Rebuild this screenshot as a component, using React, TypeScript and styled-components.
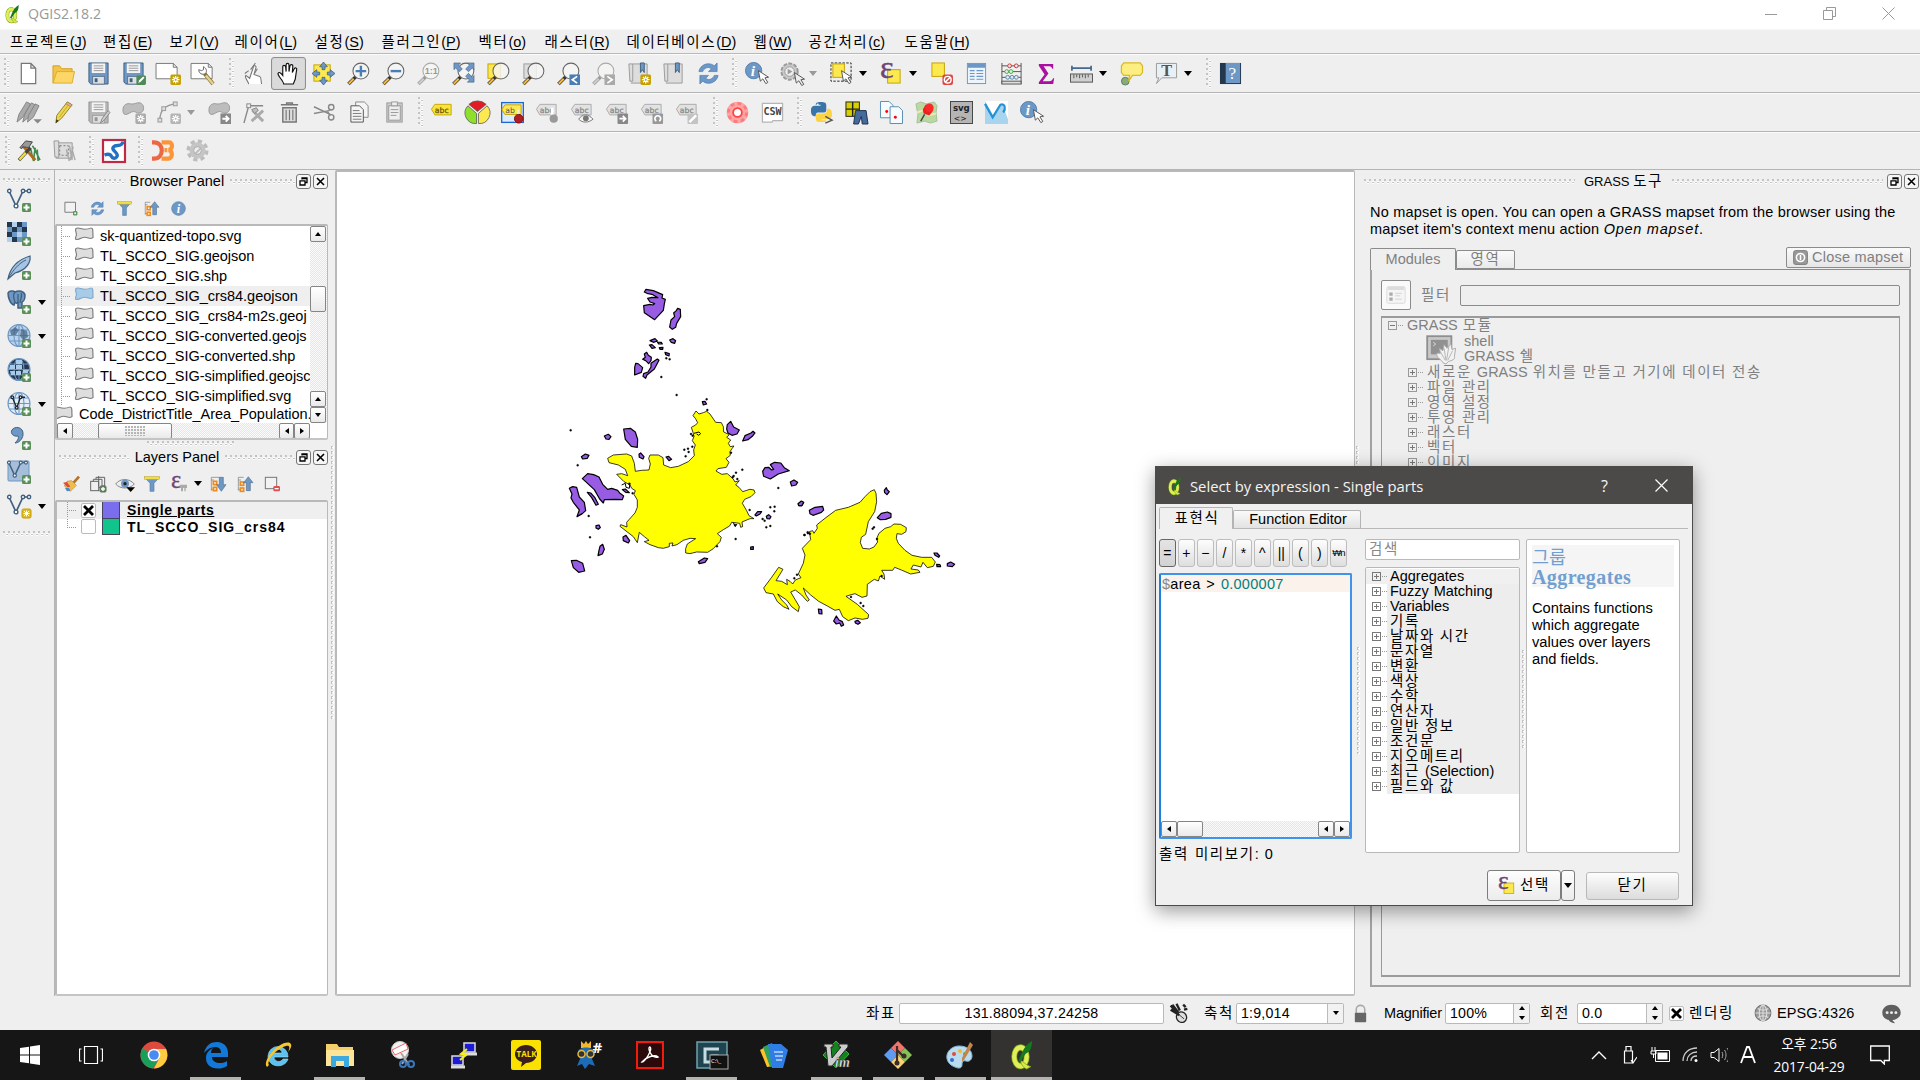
import React from 'react';
import styled, { createGlobalStyle, css } from 'styled-components';

const Global = createGlobalStyle`
  * { box-sizing: border-box; }
  html, body { margin: 0; padding: 0; overflow: hidden; background: #efefef; }
  body { font-family: "Liberation Sans", "Noto Sans CJK KR", sans-serif; font-size: 14.5px; color: #000; }
`;

/* ---------- text ---------- */
const Hangul = styled.span`
  font-size: 14.5px;
  letter-spacing: 1.6px;
`;
const Label = ({ text }: { text: string }) => (
  <>
    {text.split(/([\uac00-\ud7a3]+)/).map((part, i) => (i % 2 ? <Hangul key={i}>{part}</Hangul> : part))}
  </>
);

/* ---------- icons ---------- */
const Y = '#fce94f';
const YD = '#c4a000';
const B = '#6d97c4';
const BD = '#41607f';
const G = '#9a9a9a';

const Plus = () => (
  <g>
    <rect x="15" y="15" width="9" height="9" rx="1.5" fill="#5a8f5a" />
    <path d="M19.5 16.5v6M16.5 19.5h6" stroke="#fff" strokeWidth="2" />
  </g>
);
const Star = ({ c = YD }: { c?: string }) => (
  <g>
    <rect x="14" y="13" width="11" height="11" rx="1.5" fill={c} />
    <path d="M19.5 14.5v8M15.5 18.5h8M16.7 15.7l5.6 5.6M22.3 15.7l-5.6 5.6" stroke="#fff" strokeWidth="1.3" />
    <circle cx="19.5" cy="18.5" r="1" fill={c} />
  </g>
);
const Cursor = ({ x = 12, y = 10, c = '#fff' }: { x?: number; y?: number; c?: string }) => (
  <path transform={`translate(${x} ${y})`} d="M0 0l2 11 2.6-2.4 3.2 5 2-1.3-3-4.8 3.8-.6z" fill={c} stroke="#555" strokeWidth="1" />
);
const Lens = ({ gray, children }: { gray?: boolean; children?: React.ReactNode }) => (
  <g>
    <path d="M1.5 23L9 15.5" stroke={gray ? '#999' : '#333'} strokeWidth="3.6" />
    <path d="M1.8 22.7L7 17.5" stroke={gray ? '#ccc' : '#f5b83d'} strokeWidth="2.2" />
    <circle cx="14.5" cy="9.5" r="8.3" fill="#f4f4f2" fillOpacity=".85" stroke={gray ? '#aaa' : '#666'} strokeWidth="1.1" />
    {children}
  </g>
);
const Floppy = ({ c, d }: { c: string; d: string }) => (
  <g>
    <path d="M2 1h20v22H4l-2-2z" fill={c} stroke={d} />
    <rect x="5" y="1.5" width="14" height="10" fill="#f4f4f4" />
    <path d="M7 4h10M7 6.5h10M7 9h10" stroke="#999" />
    <rect x="6" y="15" width="12" height="8" fill="#e0e0e0" stroke={d} strokeWidth=".7" />
    <rect x="8" y="17" width="3" height="4" fill={d} />
  </g>
);
const AbcTag = ({ c = '#e2e2e2', d = '#aaa', t = '#888', children }: { c?: string; d?: string; t?: string; children?: React.ReactNode }) => (
  <g>
    <path d="M.5 8.5L4 3.500h17v11H4z" fill={c} stroke={d} />
    <text x="4" y="12" fontFamily="DejaVu Sans" fontSize="8" fill={t} stroke={t} strokeWidth=".3">abc</text>
    {children}
  </g>
);
const Blob = () => (
  <path d="M1 9c0-5 4-7 8-6s6-2 10-1 5 8 1 10-5-1-8-1-5 3-8 3-3-3-3-5z" fill="#bdbdbd" stroke="#999" />
);
const VNodes = () => (
  <g stroke={BD} strokeWidth="1.4" fill="#fff">
    <path d="M2 3l7 15 7-15h6" fill="none" strokeWidth="1.7" />
    <circle cx="2.300" cy="3" r="1.7" /><circle cx="9" cy="18" r="1.9" /><circle cx="16" cy="3" r="1.7" /><circle cx="22" cy="3" r="1.7" />
  </g>
);
const Globe = ({ c = '#b9d3ec' }: { c?: string }) => (
  <g fill="none" stroke={B} strokeWidth="1.1">
    <circle cx="12" cy="11.5" r="11" fill={c} />
    <ellipse cx="12" cy="11.5" rx="5" ry="11" />
    <path d="M1 11.500h22M3 6h18M3 17h18M12 .5v22" />
  </g>
);
const Eps = ({ x = 0, s = 22 }: { x?: number; s?: number }) => (
  <text x={x} y={s * 0.68} fontFamily="Liberation Serif" fontSize={s * 1.4} fill="#6c4675" stroke="#6c4675" strokeWidth=".5">ε</text>
);
const QMark = () => (
  <g>
    <ellipse cx="11" cy="13.500" rx="6" ry="8" fill="none" stroke="#7da21c" strokeWidth="5.600" />
    <ellipse cx="11" cy="13.500" rx="6" ry="8" fill="none" stroke="#e0ef58" strokeWidth="4.200" />
    <path d="M11 17c3 0 5 4 10 5l-4 2c-3-1-5-3-6-7z" fill="#d5ea48" stroke="#7da21c" strokeWidth=".7" />
    <path d="M9 17C12 12 13 5 22 0c0 5-1 9-6 11l-5 7z" fill="#18781d" />
  </g>
);

const icons: Record<string, React.ReactNode> = {
  qgis: <QMark />,
  page: <path d="M4.500 1.500h10l5 5v16h-15zM14.500 1.500v5h5" fill="#fff" stroke="#777" strokeWidth="1.3" />,
  folder: <g><path d="M1 22V4h7l2 3h11v3" fill="#f2c447" stroke="#d2a11d" /><path d="M1 22L5 10h18.500L21 22z" fill="#fcd667" stroke="#d9ac2b" /></g>,
  save: <Floppy c={B} d={BD} />,
  saveas: <g><Floppy c={B} d={BD} /><rect x="15" y="14" width="10" height="10" rx="1.500" fill="#4d8a55" /><path d="M17 22l1-3 4-4 1.500 1.500-4 4z" fill="#fff" /></g>,
  composer: <g><path d="M-1 1.500h18l4 4v12H-1zM17 1.500v4h4" fill="#fff" stroke="#777" /><Star /></g>,
  compmgr: <g><path d="M-1 1.500h18l4 4v12H-1zM17 1.500v4h4" fill="#fff" stroke="#777" /><path d="M13 12l9 11" stroke="#8a7433" strokeWidth="4" /><path d="M14.500 14l7.500 9" stroke="#e5d494" strokeWidth="2.500" /><path d="M7 8c0 4 4 6 7 4 2-2 1-6-2-7v3l-2 1z" fill="#fff" stroke="#666" /></g>,
  touch: <g fill="#fff" stroke="#777" strokeWidth="1.100"><path d="M7 23c-1-4-5-7-3-9l4 3 4-12c1-2 3-1 2.500 1l-2 7 6 2c2 1 1 5 2 8" /><path d="M3 12l4-3M9 8l5-7M16 7l-3 5" fill="none" /></g>,
  hand: <path d="M7 23c0-3-6-8-6-11 1-2 3-1 5 2V5c0-2 2.500-2 3 0l.5 5V3c0-2 3-2 3 0v7l1-6c.5-2 3-1.500 3 0l-.5 7 2-4c1-1.500 3-1 2.500 1L19 18l-2 5z" fill="#fff" stroke="#111" strokeWidth="1.200" />,
  pansel: <g><rect x="2" y="3" width="17" height="17" fill={Y} stroke={YD} /><path d="M12 0l4 5h-2.500v3h-3V5H8zM12 24l4-5h-2.500v-3h-3v3H8zM0 12l5-4v2.500h3v3H5V16zM24 12l-5-4v2.500h-3v3h3V16z" fill={B} stroke={BD} strokeWidth=".8" /></g>,
  zoomin: <Lens><path d="M14.500 4v11M9 9.500h11" stroke="#4b7db5" strokeWidth="2.500" /></Lens>,
  zoomout: <Lens><path d="M9 9.500h11" stroke="#4b7db5" strokeWidth="2.500" /></Lens>,
  zoom1: <Lens gray><text x="8" y="13" fontSize="9.500" fontWeight="bold" fill="#999">1:1</text></Lens>,
  zoomfull: <Lens><path d="M2 1h7L6.800 3.200l4 4-3 3-4-4L2 8zM23 1h-7l2.200 2.200-4 4 3 3 4-4L23 8zM23 21h-7l2.200-2.200-4-4 3-3 4 4L23 14z" fill={B} stroke={BD} strokeWidth=".6" /></Lens>,
  zoomsel: <g><rect x="1" y="2" width="13" height="15" fill={Y} stroke={YD} /><Lens /></g>,
  zoomlayer: <g><rect x="2" y="2" width="13" height="15" fill="#ddd" stroke={G} /><Lens /></g>,
  zoomlast: <g><Lens /><rect x="13" y="13" width="11" height="11" fill="#4b7db5" /><path d="M21 15l-5 3.500 5 3.500" stroke="#fff" strokeWidth="1.800" fill="none" /></g>,
  zoomnext: <g><Lens gray /><rect x="13" y="13" width="11" height="11" fill="#aaa" /><path d="M16 15l5 3.500-5 3.500" stroke="#fff" strokeWidth="1.800" fill="none" /></g>,
  bookmark: <g><path d="M2 2h4v18H3zM6 2h15v20H4" fill="#ddd" stroke={G} /><path d="M14 1h4v10l-2-3-2 3z" fill={B} stroke={BD} /></g>,
  refresh: <g fill={B} stroke="#4379b8" strokeWidth=".7"><path d="M2 10C3 3 12-1 18 4l3-3v9h-9l3-3c-4-3-8 0-9 3z" /><path d="M22 14c-1 7-10 11-16 6l-3 3v-9h9l-3 3c4 3 8 0 9-3z" /></g>,
  identify: <g><circle cx="9" cy="9" r="8.500" fill={B} stroke="#5580ae" /><text x="6" y="15" fontFamily="Liberation Serif" fontStyle="italic" fontWeight="bold" fontSize="16" fill="#fff">i</text><Cursor x={14} y={9} /></g>,
  action: <g><circle cx="10" cy="10" r="8.500" fill="#c9c9c9" stroke="#999" strokeWidth="2" strokeDasharray="4 1.500" /><circle cx="10" cy="10" r="5" fill="#eee" stroke={G} /><path d="M8 7l5 3-5 3z" fill={G} /><Cursor x={15} y={11} c="#eee" /></g>,
  select: <g><rect x="1" y="1" width="21" height="19" fill="none" stroke="#222" strokeDasharray="2.500 1.500" /><rect x="3" y="2" width="12" height="14" fill={Y} stroke={YD} /><Cursor x={12} y={9} /></g>,
  expr: <g><rect x="8" y="8" width="13" height="14" fill={Y} stroke={YD} /><Eps x={0} s={24} /></g>,
  deselect: <g><rect x="2" y="1" width="13" height="14" fill={Y} stroke={YD} /><rect x="13" y="13" width="11" height="11" rx="2" fill="#db4848" /><circle cx="18.500" cy="18.500" r="3.500" fill="none" stroke="#fff" strokeWidth="1.500" /><path d="M16 21l5-5" stroke="#fff" strokeWidth="1.500" /></g>,
  table: <g><rect x="2.500" y="1.500" width="19" height="21" fill="#eef4fb" stroke={B} /><path d="M3 4h18" stroke={B} strokeWidth="4" /><path d="M5 9h5M12 9h7M5 12h5M12 12h7M5 15h5M12 15h7M5 18h5M12 18h7" stroke={B} strokeWidth="1.300" /></g>,
  abacus: <g fill="#e8e8e8"><path d="M2 1v22M22 1v22M2 4h20M2 10h20M2 16h20" stroke="#555" /><rect x="2" y="20" width="20" height="3" fill="#ddd" stroke="#555" /><g stroke="#c33"><circle cx="10" cy="4" r="2" /><circle cx="17" cy="4" r="2" /></g><g stroke="#4a4"><circle cx="7" cy="10" r="2" /><circle cx="11.500" cy="10" r="2" /></g><g stroke="#58a"><circle cx="8" cy="16" r="2" /><circle cx="12.500" cy="16" r="2" /><circle cx="17" cy="16" r="2" /></g></g>,
  sigma: <path d="M4 2h15v5h-1c-.5-2-2-2.500-4-2.500H9l5 7.500-6 8h7c2 0 3-1 4-3h1l-1 6H4v-2l6-8-6-9z" fill="#aa10a0" />,
  ruler: <g><path d="M2 6.500h20M2 4v5M22 4v5" stroke="#45688e" strokeWidth="1.800" /><rect x=".5" y="12.500" width="23" height="8.500" fill="#d0d0d0" stroke="#555" /><path d="M4 13v4M7 13v3M10 13v4M13 13v3M16 13v4M19 13v3" stroke="#555" /></g>,
  tip: <g><ellipse cx="5.500" cy="20" rx="4" ry="4" fill="#86ad7e" stroke="#5a8356" /><path d="M4 1h17l2.500 3v7l-2.500 3h-8l-4 6 1-6H4l-2.500-3V4z" fill="#fcee80" stroke="#d8bb23" strokeWidth="1.300" /></g>,
  textann: <g><path d="M1.500 1.500h21v15H7l-5.500 6 2.500-6H1.500z" fill="#e9f0f5" stroke="#999" /><text x="6.500" y="14.500" fontFamily="Liberation Serif" fontSize="17" fontWeight="bold" fill="#555">T</text></g>,
  help: <g><rect x="1" y="1" width="22" height="22" fill="#23374f" /><rect x="7" y="1" width="15" height="21" fill={B} /><text x="10" y="18" fontFamily="Liberation Serif" fontSize="18" fill="#fff">?</text></g>,
  pencils: <g fill="#aaa" stroke="#848484"><path d="M0 22l2-8L10 1l4 2-8 14z" /><path d="M6 22l2-8 7-12 4 2-7 13z" /><path d="M11 22l1-7 7-12 4 2-6 12z" /></g>,
  pencil: <g><path d="M4 23l1-8L16 1l5 3-11 14z" fill="#ecd654" stroke="#927e22" /><path d="M7.500 17L18 3" stroke="#c5a72b" /><path d="M16 1l5 3-1.500 2-5-3z" fill="#e9a8a0" stroke="#927e22" strokeWidth=".6" /><path d="M4 23l.5-4 2.500 1.500z" fill="#333" /></g>,
  saveedit: <g><Floppy c="#b6b6b6" d="#939393" /><path d="M14 23l2-5 6-8 2 2-6 8z" fill="#ccc" stroke="#888" /></g>,
  addfeat: <g><Blob /><Star c="#aaa" /></g>,
  circ: <g><path d="M3 20C3 10 8 4 20 3" fill="none" stroke={G} strokeWidth="1.500" /><g fill="#ddd" stroke={G}><rect x="1" y="18" width="4" height="4" /><rect x="5" y="6" width="4" height="4" /><rect x="17" y="1" width="4" height="4" /></g><Star c="#b4b4b4" /></g>,
  movefeat: <g><Blob /><rect x="13" y="13" width="11" height="11" fill="#888" /><path d="M15 18.500h6M18.500 15.500l3 3-3 3" stroke="#fff" strokeWidth="2" fill="none" /></g>,
  node: <g fill="none" stroke="#888"><path d="M6 5L1 23M6 5h15" strokeWidth="1.400" /><rect x="4" y="3" width="4" height="4" fill="#eee" /><path d="M10 10l11 11M21 10L9 21" stroke="#aaa" strokeWidth="3" /><path d="M9 9l5-2 2 3-4 3z" fill="#bbb" /></g>,
  trash: <g fill="none" stroke="#777" strokeWidth="1.500"><path d="M5 7h14v15H5zM3 4h18M9 4V2h6v2" fill="#ddd" /><path d="M8.500 9v11M12 9v11M15.500 9v11" strokeWidth="1.200" /></g>,
  cut: <g fill="none" stroke="#888" strokeWidth="1.500"><path d="M1 6l17 8M1 13l16-3" /><circle cx="19" cy="6.500" r="2.800" /><circle cx="19" cy="17" r="2.800" /><path d="M17 10l1-2M15 11l3 4" /></g>,
  copy: <g fill="#f5f5f5" stroke="#888"><path d="M8 1h9l4 4v12H8z" /><path d="M3 5h9l4 4v13H3z" stroke="#555" /><path d="M5 10h7M5 13h9M5 16h9M5 19h9" stroke="#777" /></g>,
  paste: <g fill="#eee" stroke="#999"><rect x="4" y="2" width="16" height="20" fill="#ccc" /><rect x="6" y="5" width="12" height="15" /><path d="M8 9h8M8 12h8M8 15h6" /><rect x="9" y="1" width="6" height="4" /></g>,
  abc: <AbcTag c="#fae437" d="#c7a60c" t="#6b5a08" />,
  pie: <g stroke="#555" strokeWidth=".8"><path d="M12 11L3 3.500a13 13 0 0 1 18 0z" fill="#e11c22" /><path d="M11 13v10.500A11 11 0 0 1 2 5z" fill="#8fe02c" /><path d="M13 13v10.500A11 11 0 0 0 22 5z" fill="#fce94f" /></g>,
  abcpin: <g><rect x=".7" y="1.700" width="22.600" height="20.600" fill="#dcecff" stroke="#1c69d4" strokeWidth="1.400" /><path d="M1 9l3-5h17v10H4z" fill={Y} stroke={YD} /><text x="4.500" y="12.500" fontFamily="DejaVu Sans" fontSize="8" fill="#555">ab</text><path d="M18 9v8" stroke="#eee" strokeWidth="2" /><circle cx="18.500" cy="18.500" r="4.500" fill="#b41d22" stroke="#7a1014" /></g>,
  abc1: <AbcTag><path d="M17 7v8" stroke="#fff" strokeWidth="3" /><circle cx="18.500" cy="18.500" r="4.300" fill="#999" /></AbcTag>,
  abc2: <AbcTag><path d="M8 19c4-6 10-6 15 0-5 4-11 4-15 0z" fill="#f4f4f4" stroke="#777" /><circle cx="15.500" cy="18" r="3" fill="#777" /></AbcTag>,
  abc3: <AbcTag><rect x="12" y="13" width="11" height="11" rx="1" fill="#888" /><path d="M14 18.500h6M17.500 15.500l3 3-3 3" stroke="#fff" strokeWidth="1.800" fill="none" /></AbcTag>,
  abc4: <AbcTag><rect x="12" y="13" width="11" height="11" rx="1" fill="#999" /><path d="M16 21a3 3 0 1 1 3 0" stroke="#fff" strokeWidth="1.800" fill="none" /></AbcTag>,
  abc5: <AbcTag><rect x="12" y="13" width="11" height="11" rx="1" fill="#c3c3c3" /><path d="M14 22l7-7" stroke="#fff" strokeWidth="2.500" /></AbcTag>,
  buoy: <g fill="none"><circle cx="12" cy="12" r="7.300" stroke="#ffa5a5" strokeWidth="8" /><circle cx="12" cy="12" r="9.500" stroke="#f97d7d" strokeWidth="3" strokeDasharray="4 3.400" /><circle cx="12" cy="12" r="4.500" stroke="#ff4343" strokeWidth="2" /><circle cx="12" cy="12" r="3.500" fill="#fff" /></g>,
  csw: <g><path d="M1.500 2.500h21v18h-10l-1 1.500h-10z" fill="#fff" stroke="#b5b5b5" strokeWidth="1.300" /><text x="2.600" y="14.500" fontFamily="DejaVu Sans Mono" fontWeight="bold" fontSize="10.500" fill="#444">CSW</text></g>,
  python: <g><path d="M11 1c5 0 6 1 6 4v4c0 3-2 3-5 3H9c-3 0-3 2-3 4-4 0-5-2-5-6 0-5 3-5 6-5h4V4H6c0-2 1-3 5-3z" fill="#3b75a8" /><path d="M12 22c-5 0-6-1-6-4v-2c0-3 2-3 5-3h3c3 0 4-2 4-5 4 0 5 2 5 6s-3 5-6 5h-5v1h5c0 2-1 2-5 2z" fill="#fbd343" /><circle cx="8" cy="3.500" r="1" fill="#fff" /><path d="M16 16l7 4-7 3" fill="none" stroke="#555" strokeWidth="1.500" /></g>,
  pants: <g><rect x="1" y="1" width="14" height="15" fill="#d7cf00" stroke="#222" /><path d="M8 1v15M1 8.500h14" stroke="#222" strokeWidth="1.500" /><path d="M11 10h11l2 14h-6l-1-8-3 8H9z" fill="#456a9c" stroke="#1d2f4f" /></g>,
  coords: <g fill="#f6fbff" stroke="#568cae"><path d="M.5.5h9l4 4v13H.5z" /><path d="M10.500 6h9l4 4v13.500h-13z" /><circle cx="7" cy="11" r="1.500" fill="red" stroke="none" /><circle cx="16" cy="17" r="1.500" fill="red" stroke="none" /></g>,
  pin: <g><path d="M1 3l5-2 6 2 8-2 3 4-1 7 1 9-7 2-6-2-8 2 1-9z" fill="#b9d9a0" stroke="#a7bf97" /><path d="M2 12l8-3 4 6 8-2" stroke="#eee8b0" strokeWidth="2" fill="none" /><path d="M10 14l-4 7" stroke="#444" strokeWidth="1.500" /><path d="M8 9l3-5 6 0 2 6-4 5-6-2z" fill="#ef2020" /><circle cx="15" cy="7" r="4.500" fill="#fa2a2a" /></g>,
  svg: <g><rect x=".5" y=".5" width="23" height="23" fill="#b5b5b5" stroke="#444" /><text x="3" y="10.500" fontFamily="DejaVu Sans" fontWeight="bold" fontSize="9" fill="#222">svg</text><text x="4" y="20.500" fontFamily="DejaVu Sans" fontSize="8" fill="#222">&lt;&gt;</text></g>,
  vgraph: <g><rect width="24" height="24" fill="#fff" /><path d="M0 0l9 16L18 3l6 16v5H0z" fill="#a8d4ef" /><path d="M0 3l8 14L16 4c5-2 6 4 3 8" fill="none" stroke="#1f93d6" strokeWidth="2.300" /></g>,
  hammer: <g><path d="M15 7c4 5 5 10 8 15M13 10c2 5 1 10 4 13M18 9l-2 14M20 11l1 12" stroke="#3f8a4c" strokeWidth="1.700" fill="none" /><path d="M5 7l13 15" stroke="#b06a18" strokeWidth="3" /><path d="M1 22l12-13" stroke="#444" strokeWidth="3.600" /><path d="M1.500 21.500L8 14.500" stroke="#f0de3d" strokeWidth="2.400" /><path d="M2 9l6-7 7 1-4 6-6-1-1 2z" fill="#999" stroke="#444" /></g>,
  region: <g><path d="M1 2h5v17H2zM6 4h14v16H3" fill="#ddd" stroke="#999" /><rect x="7" y="7" width="9" height="10" fill="none" stroke="#777" strokeDasharray="2 2" /><path d="M17 7l3 15M14 11l3 12M20 11l3 11M21 8l-3 14" stroke="#aaa" strokeWidth="1.500" /></g>,
  river: <g><rect x="1" y="1" width="22" height="22" fill="#fff" stroke="#bf2945" strokeWidth="2.200" /><path d="M2.500 16c4-1.500 6-.5 7 1.500s4 2.500 5.500 0-2-4.500-3.500-6.500 0-4.500 4-4.500 5-1.500 5.500-4" fill="none" stroke="#2271c4" strokeWidth="3.400" /></g>,
  d3: <g fill="none" strokeWidth="4.400"><path d="M1 3.500h2c11 0 11 17 0 17H1" stroke="#ec6842" /><path d="M11 3.500h8c4 0 4 8-1 8 5 0 5 9 0 9h-7M17 11.500h-3" stroke="#fb9537" /></g>,
  gear: <g><circle cx="12" cy="12" r="9" fill="none" stroke="#bcbcbc" strokeWidth="5" strokeDasharray="4 3.070" /><circle cx="12" cy="12" r="8.500" fill="#c5c5c5" /><circle cx="12" cy="12" r="4" fill="#eee" stroke="#aaa" /><path d="M9 16l6-6" stroke="#bbb" strokeWidth="2" /></g>,
  addvec: <g><VNodes /><Plus /></g>,
  newvec: <g><VNodes /><rect x="15" y="15" width="9" height="9" rx="1.500" fill="#dcb92d" stroke={YD} /><path d="M19.500 16.500v6M16.500 19.500h6M17 17l5 5M22 17l-5 5" stroke="#fff" /></g>,
  addras: <g><rect width="20" height="20" fill={B} /><path d="M0 0h5v5H0zM10 0h5v5h-5zM5 5h5v5H5zM15 5h5v5h-5zM0 10h5v5H0zM5 15h5v5H5z" fill="#23374f" /><path d="M5 0h5v5H5zM0 15h5v5H0zM10 10h5v5h-5z" fill="#b5d0ea" /><Plus /></g>,
  feather: <g><path d="M1 23C3 12 10 4 23 0c1 7-4 14-15 17z" fill="#a5c3e2" stroke={BD} strokeWidth="1.200" /><path d="M1 23C6 14 12 7 19 4" fill="none" stroke={BD} /><Plus /></g>,
  pg: <g><path d="M1 3c1-2 5-3 7-1 4-2 9-1 10 3 0 5-1 6-3 7v6h-4v-6c-1 2-3 1-3 0l-1 3c-4-1-6-8-6-12z" fill={B} stroke={BD} strokeWidth="1.500" /><path d="M8 2c-3 3-1 7 0 10M14 3c2 3-1 6-1 10M11 4v8" fill="none" stroke={BD} strokeWidth="1.300" /><Plus /></g>,
  spatia: <g><Globe /><path d="M3 7l5-4 4 3-3 5-5 0zM14 5l6 2 1 6-5 3-3-4z" fill={BD} fillOpacity=".7" /><Plus /></g>,
  wms: <g><Globe c="#23374f" /><path d="M3 7h5v4H2zM9 2h6v4H9zM9 7h6v4H9zM16 12h6l-2 5h-5zM3 13h5v4H4zM9 13h5v4H9z" fill="#a9cbea" /><Plus /></g>,
  wfs: <g><Globe c="#e3eef9" /><g transform="translate(3 3) scale(.75)" stroke="#222" fill="#fff" strokeWidth="1.700"><path d="M3 3l6 14 5-14h6" fill="none" /><circle cx="3" cy="3" r="1.700" /><circle cx="9" cy="17" r="1.700" /><circle cx="14" cy="3" r="1.700" /></g><Plus /></g>,
  comma: <g><path d="M5 4c2-4 12-4 11 5-.5 4-4 8-8 8 3-3 4-5 3-7-5 1-8-3-6-6z" fill={B} stroke={BD} /><Plus /></g>,
  virt: <g><rect x="1" y="1" width="21" height="20" rx="1" fill="#a5bfda" stroke={B} /><g transform="scale(.86)"><VNodes /></g><Plus /></g>,
  newlayer: <g><path d="M3 2h17v16H3z" fill="#f2f2f2" stroke="#777" strokeWidth="1.500" /><rect x="16" y="16" width="7" height="7" rx="2" fill="#5a9a5a" /><circle cx="19.500" cy="19.500" r="1.500" fill="#fff" /></g>,
  filter: <g><path d="M1 2h22l-8 9v12H9V11z" fill={B} stroke="#5580ae" /><rect x="1" y="1" width="22" height="4" fill="#f4de3f" stroke="#bca530" strokeWidth=".7" /></g>,
  collapse: <g><path d="M2 2v20M2 6h4M2 20h4M2 2h8" stroke="#777" fill="none" /><rect x="5" y="9" width="5" height="5" fill="none" stroke="#ef8a1d" strokeWidth="2.500" /><rect x="5" y="18" width="5" height="5" fill="none" stroke="#ef8a1d" strokeWidth="2.500" /><path d="M14 22V10h-4l7-9 7 9h-4v12z" fill={B} stroke={BD} strokeWidth=".8" /></g>,
  expand: <g><path d="M2 2v20M2 6h4M2 20h4M2 2h12" stroke="#777" fill="none" /><rect x="5" y="8" width="5" height="5" fill="none" stroke="#ef8a1d" strokeWidth="2.500" /><rect x="5" y="17" width="5" height="5" fill="none" stroke="#ef8a1d" strokeWidth="2.500" /><path d="M14 2v11h-4l7 10 7-10h-4V2z" fill={B} stroke={BD} strokeWidth=".8" /></g>,
  info: <g><circle cx="12" cy="12" r="11" fill={B} stroke="#5580ae" /><text x="9" y="19" fontFamily="Liberation Serif" fontStyle="italic" fontWeight="bold" fontSize="20" fill="#fff">i</text></g>,
  brush: <g><path d="M24 1l-8 9" stroke="#b5722a" strokeWidth="4" /><path d="M6 8l7-1 7 7-9 9-9-8z" fill="#edbd52" stroke="#c18525" /><path d="M0 10l6-1 5 7-4 1z" fill="#dd4a3c" /><path d="M3 18l6 0 2 4-5 1z" fill="#4a86c8" /></g>,
  group: <g fill="none" stroke="#666" strokeWidth="1.500"><rect x="1" y="8" width="12" height="14" /><path d="M5 8V5h13v12h-5M9 5V2h13v13h-4M13 0v15" /><Plus /></g>,
  eye: <g><path d="M-2 12C5 3 18 3 26 12c-7 8-21 8-28 0z" fill="#eee" stroke="#888" strokeWidth="1.500" /><circle cx="12" cy="11.500" r="6" fill={B} /><circle cx="12" cy="11.500" r="2.500" fill="#222" /><path d="M14 17h13l-6.500 7z" fill="#000" /></g>,
  epsfil: <g><Eps s={26} /><path d="M13 13h11v5h-2v5h-2v-5h-2v5h-3v-5h-2z" fill="#aaa" /></g>,
  remove: <g><rect x="2" y="2" width="17" height="17" fill="#f2f2f2" stroke="#777" strokeWidth="1.500" /><rect x="14" y="15" width="10" height="8" rx="2" fill="#e34d4d" /><path d="M16 19h6" stroke="#fff" strokeWidth="2" /></g>,
  poly: <path d="M2 4c4-4 8 4 18-1 4-1 2 8 3 13-3 5-8-3-14 1-5 3-8 3-7-1 3-5-1-7 0-12z" fill="#dedede" stroke="#7c7c7c" strokeWidth="1.400" />,
  polyblue: <path d="M2 4c4-4 8 4 18-1 4-1 2 8 3 13-3 5-8-3-14 1-5 3-8 3-7-1 3-5-1-7 0-12z" fill="#a8cbe8" stroke="#7fa8cc" strokeWidth="1.400" />,
  mouse: <g stroke="#222" fill="#ddd"><ellipse cx="15" cy="17" rx="6" ry="6.500" transform="rotate(-30 15 17)" strokeWidth="1.500" /><path d="M4 2l7 9M2 8l8 5M9 1l4 8M17 2l3 3M18 8l4-1M2 3l10 12" strokeWidth="2.800" /><path d="M12 14l6 5" /></g>,
  lock: <g><path d="M6 12V7c0-7 12-7 12 0v5" fill="none" stroke="#aaa" strokeWidth="2.200" /><rect x="4" y="11" width="16" height="12" rx="1" fill="#666" /></g>,
  globe: <g fill="none" stroke="#777" strokeWidth="1.400"><circle cx="12" cy="12" r="10.500" fill="#999" /><path d="M2 12h20M12 2v20M5 6c4 3 10 3 14 0M5 18c4-3 10-3 14 0" stroke="#ddd" /><ellipse cx="12" cy="12" rx="5" ry="10.500" stroke="#ddd" /></g>,
  chat: <g><path d="M12 2c6 0 10.500 4 10.500 9S18 19 13 19.500L16 23c-6 0-7-3.500-7-3.500C4 18.500 1.500 15 1.500 11 1.500 6 6 2 12 2z" fill="#5f5f5f" /><circle cx="7" cy="11" r="1.700" fill="#eee" /><circle cx="12" cy="11" r="1.700" fill="#eee" /><circle cx="17" cy="11" r="1.700" fill="#eee" /></g>,
  power: <g><rect x="1" y="1" width="22" height="22" rx="3" fill="#999" stroke="#777" strokeWidth="1.500" /><circle cx="12" cy="12" r="6.500" fill="none" stroke="#fff" strokeWidth="2.500" /><path d="M12 8v8" stroke="#fff" strokeWidth="2.500" /></g>,
  listview: <g><rect x="1" y="2" width="22" height="20" rx="2" fill="#f5f5f5" stroke="#d6d6d6" /><path d="M2 4h20" stroke="#ddd" strokeWidth="4" /><path d="M4 11h4M4 17h4" stroke="#aaa" strokeWidth="4" /><path d="M11 10h8M11 13h6M11 17h8" stroke="#ccc" /></g>,
  shell: <g><rect x="1" y="1" width="20" height="19" fill="#c9c9c9" stroke="#8f8f8f" strokeWidth="1.500" /><rect x="4" y="4" width="14" height="12" fill="#919191" /><path d="M6 6l2 1.500-2 1.500" fill="none" stroke="#ddd" strokeWidth=".8" /><path d="M14 23c-1-3-6-4-5-8l3 0-1-4 3 2 1-5 2.500 3 3-4 1 5 3-1-1 7c1 2-2 3-5 4l-2 2z" fill="#f2f2f2" stroke="#aaa" strokeWidth=".8" /><path d="M12 14l4 7M15 11l1.500 10M19 9l-2 12M22 13l-4 8" stroke="#b5b5b5" strokeWidth=".8" fill="none" /></g>,
};
icons.newbook = <g>{icons.bookmark}<Star /></g>;
icons.pencilsdd = <g>{icons.pencils}<path d="M17 19h9l-4.500 4.500z" fill="#888" /></g>;

const IconSvg = styled.svg`
  display: block;
  flex: none;
  overflow: visible;
`;
const Icon = ({ n, s = 24, w }: { n: string; s?: number; w?: number }) => (
  <IconSvg width={w ?? s} height={s} viewBox="0 0 24 24" preserveAspectRatio={w ? 'none' : undefined}>{icons[n]}</IconSvg>
);

/* ---------- shared parts ---------- */
const ZigV = styled.div`
  width: 5px;
  height: 30px;
  background: radial-gradient(circle at 1px 1px, #c4c4c4 0.8px, #fff 1px, #fff 1.4px, transparent 1.6px) 0 0 / 5px 5px,
    radial-gradient(circle at 4px 3.5px, #c4c4c4 0.8px, #fff 1px, #fff 1.4px, transparent 1.6px) 0 0 / 5px 5px;
`;
const ZigH = styled(ZigV)<{ $w?: number; $mt?: number }>`
  width: ${p => (p.$w ? `${p.$w}px` : 'auto')};
  flex: ${p => (p.$w ? 'none' : 1)};
  margin-top: ${p => p.$mt ?? 0}px;
  height: 5px;
`;
const DotsV = styled.div<{ $h: number }>`
  width: 3px;
  height: ${p => p.$h}px;
  background: linear-gradient(135deg, #c2c2c2 50%, #fff 50%) 0 0 / 3px 2.500px;
  mask: repeating-linear-gradient(#000 0 3px, transparent 3px 5px);
`;
const Caret = styled.i<{ $gray?: boolean }>`
  display: block;
  flex: none;
  width: 0;
  border: 4.500px solid transparent;
  border-top: 5px solid ${p => (p.$gray ? '#999' : '#000')};
  border-bottom: 0;
`;

/* ---------- window chrome ---------- */
const Screen = styled.div`
  width: 1920px;
  height: 1080px;
  display: flex;
  flex-direction: column;
  background: #efefef;
  position: relative;
  overflow: hidden;
  line-height: 1;
  white-space: pre;
`;
const TitleBar = styled.header`
  height: 30px;
  flex: none;
  background: #fff;
  border-bottom: 1px solid #f7f7f7;
  display: flex;
  align-items: center;
  padding: 0 25px 2px 4px;
  gap: 8px;
  color: #999;
  font: 14.200px "Open Sans", sans-serif;
`;
const WinButtons = styled.div`
  margin-left: auto;
  display: flex;
  gap: 46px;
  align-items: center;
`;
const MenuBar = styled.nav`
  height: 24px;
  flex: none;
  display: flex;
  align-items: center;
  padding: 1px 0 0 10px;
  border-bottom: 1px solid #b9b9b9;
`;
const MenuItem = styled.span<{ $w: number }>`
  width: ${p => p.$w}px;
  u { text-underline-offset: 2px; }
`;
const Toolbar = styled.div<{ $h?: number }>`
  height: ${p => p.$h ?? 39}px;
  flex: none;
  display: flex;
  align-items: center;
  border-top: 1px solid #fbfbfb;
  border-bottom: 1px solid #b4b4b4;
  padding-bottom: 1px;
`;
const GripSlot = styled.div<{ $w: number }>`
  width: ${p => p.$w}px;
  display: flex;
  justify-content: flex-end;
  padding-right: 2px;
  flex: none;
`;
const Tool = styled.div<{ $w?: number; $on?: boolean }>`
  width: ${p => p.$w ?? 35}px;
  height: 33px;
  flex: none;
  display: flex;
  align-items: center;
  justify-content: center;
  ${p => p.$on && css`
    border: 1px solid #8f8f8f;
    border-radius: 3px;
    background: #dadada;
    box-shadow: inset 0 0 1px #aaa;
  `}
`;
const Drop = styled.div`
  width: 15px;
  flex: none;
`;
type Item = string | number;
/* numbers are grips of that width, ">" an enabled drop arrow, "~" a disabled one */
const ToolItems = ({ items }: { items: Item[] }) => (
  <>
    {items.map((it, i) => {
      if (typeof it === 'number') return <GripSlot key={i} $w={it}><ZigV /></GripSlot>;
      if (it === '>' || it === '~') return <Drop key={i}><Caret $gray={it === '~'} /></Drop>;
      return <Tool key={i} $on={it === 'hand'} $w={it === 'circ' ? 35.5 : undefined}><Icon n={it} s={it === 'river' ? 24 : 23} /></Tool>;
    })}
  </>
);
const row1: Item[] = [10.6, 'page', 'folder', 'save', 'saveas', 'composer', 'compmgr', 15, 'touch', 'hand', 'pansel', 'zoomin', 'zoomout', 'zoom1', 'zoomfull', 'zoomsel', 'zoomlayer', 'zoomlast', 'zoomnext', 'newbook', 'bookmark', 'refresh', 13.5, 'identify', 'action', '~', 'select', '>', 'expr', '>', 'deselect', 'table', 'abacus', 'sigma', 'ruler', '>', 'tip', 'textann', '>', 14, 'help'];
const row2: Item[] = [11, 'pencilsdd', 'pencil', 'saveedit', 'addfeat', 'circ', '~', 'movefeat', 'node', 'trash', 'cut', 'copy', 'paste', 13, 'abc', 'pie', 'abcpin', 'abc1', 'abc2', 'abc3', 'abc4', 'abc5', 15, 'buoy', 'csw', 14, 'python', 'pants', 'coords', 'pin', 'svg', 'vgraph', 'identify'];
const row3: Item[] = [11.5, 'hammer', 'region', 14.5, 'river', 14, 'd3', 'gear'];

const menus: [string, string, number][] = [
  ['프로젝트', 'J', 93], ['편집', 'E', 66.5], ['보기', 'V', 65], ['레이어', 'L', 80], ['설정', 'S', 67], ['플러그인', 'P', 97],
  ['벡터', 'o', 66], ['래스터', 'R', 82], ['데이터베이스', 'D', 127], ['웹', 'W', 55], ['공간처리', 'c', 96], ['도움말', 'H', 80],
];

/* ---------- main area ---------- */
const Main = styled.main`
  height: 826px;
  flex: none;
  display: flex;
`;
const SideBar = styled.aside`
  width: 55px;
  border-right: 1px solid #b4b4b4;
  padding: 8px 0 0 3px;
  flex: none;
`;
const SideItem = styled.div`
  height: 34px;
  display: flex;
  align-items: center;
  gap: 7px;
  padding-left: 4px;
`;
const LeftDock = styled.section`
  width: 274px;
  flex: none;
  display: flex;
  flex-direction: column;
`;
const DockTitle = styled.div<{ $h?: number; $gap?: number }>`
  height: ${p => p.$h ?? 22}px;
  flex: none;
  display: flex;
  align-items: center;
  padding: 0 1px 0 4px;
  gap: ${p => p.$gap ?? 6}px;
`;
const SmallTitle = styled.span`
  font-size: 13px;
`;
const DockBtns = styled.div`
  display: flex;
  gap: 2px;
  margin-left: -5px;
`;
const DockBtn = styled.span`
  width: 15px;
  height: 15px;
  border: 1px solid #777;
  border-radius: 3px;
  background: #f6f6f6;
  display: flex;
  align-items: center;
  justify-content: center;
`;
const DockButtons = () => (
  <DockBtns>
    <DockBtn><svg width="9" height="9" viewBox="0 0 9 9"><path d="M3 2.500V1h5v4.500H6M3 1.500h5" fill="none" stroke="#000" strokeWidth="1.300" /><path d="M1 3.800h5V8H1z" fill="#fff" stroke="#000" strokeWidth="1.300" /></svg></DockBtn>
    <DockBtn><svg width="9" height="9" viewBox="0 0 9 9"><path d="M1 1l7 7M8 1L1 8" stroke="#000" strokeWidth="1.600" /></svg></DockBtn>
  </DockBtns>
);
const MiniTools = styled.div<{ $h: number }>`
  height: ${p => p.$h}px;
  flex: none;
  display: flex;
  align-items: center;
  padding-left: 2px;
`;
const Mini = styled.div<{ $w?: number }>`
  width: ${p => p.$w ?? 27}px;
  flex: none;
  display: flex;
  justify-content: center;
`;
const Frame = styled.div<{ $h?: number }>`
  height: ${p => (p.$h ? `${p.$h}px` : 'auto')};
  flex: ${p => (p.$h ? 'none' : 1)};
  background: #fff;
  border: 2px solid #b9b9b9;
  border-right-width: 1px;
  border-bottom-color: #c4c4c4;
  border-radius: 2px;
  margin-right: 1px;
  overflow: hidden;
`;
const BrowserGrid = styled.div`
  display: grid;
  grid-template-columns: 1fr 17px;
  grid-template-rows: 197px 16px;
  height: 100%;
`;
const FileList = styled.div`
  overflow: hidden;
`;
const FileRow = styled.div<{ $on?: boolean; $top?: boolean }>`
  height: ${p => (p.$top ? 17 : 20)}px;
  width: 253px;
  display: flex;
  align-items: center;
  background: ${p => (p.$on ? '#efefef' : 'transparent')};
  padding-left: ${p => (p.$top ? 0 : 4)}px;
  overflow: hidden;
  letter-spacing: -0.02px;
  &::before {
    content: '';
    display: ${p => (p.$top ? 'none' : 'block')};
    width: 10px;
    height: 20px;
    flex: none;
    background: linear-gradient(90deg, #999 50%, transparent 50%) 0 10px / 2px 1px repeat-x,
      linear-gradient(#999 50%, transparent 50%) 0 0 / 1px 2px repeat-y;
  }
  svg { margin: 0 6px 3px ${p => (p.$top ? -4 : 3)}px; }
`;
const hatch = css`
  background: repeating-conic-gradient(#e6e6e6 0 25%, #fafafa 0 50%) 0 0 / 2px 2px;
`;
const VBar = styled.div`
  ${hatch}
  display: flex;
  flex-direction: column;
`;
const HBar = styled.div`
  ${hatch}
  display: flex;
  grid-column: 1 / 2;
  height: 16px;
  flex: none;
`;
const SbBtn = styled.span<{ $w?: number; $h?: number; $mt?: number; $ml?: number }>`
  width: ${p => p.$w ?? 16}px;
  height: ${p => p.$h ?? 16}px;
  margin-top: ${p => p.$mt ?? 0}px;
  margin-left: ${p => p.$ml ?? 0}px;
  flex: none;
  border: 1px solid #858585;
  border-radius: 2px;
  background: linear-gradient(#fff, #e9e9e9);
  display: flex;
  align-items: center;
  justify-content: center;
`;
const rot = { up: 180, down: 0, left: 90, right: -90 };
const Tri = styled.i<{ $d: keyof typeof rot }>`
  border: 3.500px solid transparent;
  border-top: 4.500px solid #000;
  border-bottom: 0;
  transform: rotate(${p => rot[p.$d]}deg);
`;
const ThumbDots = styled.span`
  width: 20px;
  height: 10px;
  background: radial-gradient(circle at 1px 1px, #b5b5b5 0.8px, transparent 1px) 0 0 / 3px 3px;
`;
const files = ['sk-quantized-topo.svg', 'TL_SCCO_SIG.geojson', 'TL_SCCO_SIG.shp', 'TL_SCCO_SIG_crs84.geojson', 'TL_SCCO_SIG_crs84-m2s.geoj', 'TL_SCCO_SIG-converted.geojs', 'TL_SCCO_SIG-converted.shp', 'TL_SCCO_SIG-simplified.geojsc', 'TL_SCCO_SIG-simplified.svg'];

const LayerRow = styled.div<{ $on?: boolean }>`
  height: 16.500px;
  display: flex;
  align-items: center;
  background: ${p => (p.$on ? '#efefef' : 'transparent')};
  padding-left: 10px;
  font-weight: bold;
  font-size: 14px;
  &::before {
    content: '';
    width: 10px;
    background: linear-gradient(90deg, #999 50%, transparent 50%) 0 8px / 2px 1px repeat-x,
      linear-gradient(#999 50%, transparent 50%) 0 0 / 1px 2px repeat-y;
    height: ${p => (p.$on ? 16 : 9)}px;
    margin-bottom: ${p => (p.$on ? 0 : 7)}px;
  }
`;
const Check = styled.span`
  width: 15px;
  height: 15px;
  border: 1px solid #bbb;
  border-radius: 2px;
  background: #fff;
  display: flex;
  align-items: center;
  justify-content: center;
  flex: none;
`;
const CheckX = () => <svg width="11" height="11" viewBox="0 0 11 11"><path d="M1 1l9 9M10 1l-9 9" stroke="#000" strokeWidth="2.800" /></svg>;
const Swatch = styled.span<{ $c: string }>`
  width: 18px;
  height: 16.500px;
  background: ${p => p.$c};
  border: 1px solid #454560;
  border-width: 0 1px 1px 1px;
  margin: 0 7px 0 6px;
`;
const LayerName = styled.span<{ $u?: boolean; $ls: number }>`
  text-decoration: ${p => (p.$u ? 'underline' : 'none')};
  letter-spacing: ${p => p.$ls}px;
`;
const Splitter = styled.div<{ $w: number }>`
  width: ${p => p.$w}px;
  flex: none;
  display: flex;
  align-items: center;
  justify-content: center;
`;
const Canvas = styled.div`
  width: 1020px;
  flex: none;
  background: #fff;
  border: 2px solid #b9b9b9;
  border-right-width: 1px;
  border-bottom-color: #c0c0c0;
  border-radius: 2px;
`;

/* ---------- map ---------- */
const mainland =
  'M429 437L438 423L447 432L460 428L470 424L480 432L497 457L514 458L520 470L521 486L538 494L530 502L542 510L535 520L541 530L552 528L546 536L540 545L541 556L528 566L537 577L529 592L504 596L498 603L515 613L532 611L549 626L555 636L568 632L557 645L567 652L578 665L600 658L612 660L615 668L603 680L584 688L577 700L590 722L597 737L612 746L600 746L576 756L578 770L572 772L569 760L545 757L539 768L520 779L502 791L514 802L510 815L490 836L473 847L440 846L420 851L407 849L407 836L412 822L437 806L420 805L400 811L381 824L366 828L369 819L358 820L358 830L340 835L325 833L300 824L283 815L297 811L283 800L268 787L262 818L250 800L210 769L212 764L231 771L230 757L238 748L255 729L262 712L262 690L252 673L256 662L245 655L240 645L222 635L200 613L215 611L233 617L226 598L205 585L177 578L173 565L190 555L230 552L245 558L253 580L256 604L275 601L297 600L301 582L296 565L300 555L325 555L339 563L341 585L362 593L385 589L415 575L433 557L431 540L436 525L427 512L432 500L430 490L424 472L437 465L443 458L436 445Z';
const eastland =
  'M403 149L408 160L410 185L404 215L385 245L377 283L364 292L361 308L368 325L388 327L402 321L413 306L410 296L417 280L435 265L452 260L462 252L482 253L499 263L498 275L485 283L471 281L469 295L475 310L495 331L516 346L545 352L575 352L586 366L580 379L562 383L549 367L543 381L520 375L513 387L535 390L540 397L512 402L484 390L464 382L458 391L425 391L432 402L434 418L420 408L415 423L403 418L382 433L381 468L366 472L345 461L327 466L318 469L352 493L386 524L384 535L367 538L345 534L325 542L308 530L298 508L285 511L262 498L236 484L212 465L190 444L198 465L208 480L202 484L185 465L166 450L152 456L165 478L178 500L175 515L155 500L140 480L113 462L125 480L140 495L147 508L130 500L112 485L100 462L78 458L71 444L95 412L116 382L129 388L108 422L125 424L142 434L140 418L150 424L158 432L166 420L183 413L175 402L190 370L195 345L187 325L212 299L208 275L218 272L222 280L232 265L230 255L255 235L287 211L325 202L360 187L375 170L390 155Z';
const isles = [
  'M283 66L288 58L310 62L338 74L336 84L346 88L343 102L340 121L314 149L283 128L281 107L300 103L308 105L314 101L300 96L293 85L306 82L324 83L306 73L291 70Z',
  'M371 129L379 122L383 115L391 118L392 140L380 160L377 172L367 178L359 171L363 150L374 140Z',
  'M359 210L369 206L377 212L374 220L364 217Z',
  'M300 212L315 206L322 213L310 217ZM298 225L306 224L316 233L306 235ZM322 216L334 217L337 222L326 222ZM328 233L339 232L338 238L330 238ZM345 247L358 251L357 258L347 254Z',
  'M283 252L290 247L295 256L304 262L303 272L296 281L287 272L278 268L286 262Z',
  'M257 280L264 281L278 293L274 307L254 315L254 292Z',
  'M303 280L322 267L327 271L313 297L291 315L287 325L279 319L281 311L294 306L303 291Z',
  'M457 395L465 394L470 402L460 405Z',
  'M221 477L241 475L256 486L263 508L262 532L244 529L226 508Z',
  'M163 498L175 493L183 500L177 508L168 507ZM94 560L106 552L117 556L112 565L98 567ZM267 553L272 549L282 560L279 567L268 562ZM348 561L356 559L365 568L357 572Z',
  'M97 626L113 611L131 614L147 621L158 643L173 658L185 655L203 661L209 669L221 678L217 689L196 688L163 689L160 699L149 687L133 659L107 635Z',
  'M58 655L68 650L80 652L88 681L103 697L107 722L97 731L81 740L88 720L70 697L63 684L66 672Z',
  'M112 667L122 669L134 682L145 703L138 706L125 683Z',
  'M217 659L226 657L238 668L227 667Z',
  'M138 767L147 765L151 773L145 778L138 774ZM219 801L228 796L239 812L235 819L220 812Z',
  'M150 829L158 823L163 838L157 852L144 857L147 841Z',
  'M64 872L79 871L98 880L104 903L86 907L70 893Z',
  'M445 875L463 864L473 866L465 877L448 881Z',
  'M532 464L542 454L551 471L568 480L561 492L546 496L534 489L530 477Z',
  'M578 513L585 497L603 489L609 484L615 489L607 499L594 509Z',
  'M638 604L645 593L656 592L665 600L671 598L661 584L674 577L692 579L703 593L718 602L685 612L661 627L641 619Z',
  'M721 636L732 630L743 637L738 645L725 648ZM745 702L753 695L761 698L755 708L747 707ZM615 735L623 725L635 725L630 732L619 738ZM649 739L656 734L663 740L659 747L651 746Z',
  'M602 831L610 830L610 838L602 838Z',
];
const eastIsles = [
  'M208 211L225 202L248 199L251 210L244 217L219 226L210 221Z',
  'M412 233L424 220L442 216L453 221L453 232L437 238L421 239Z',
  'M433 151L439 143L442 150L448 155L441 164L434 158Z',
  'M174 191L184 183L191 187L186 196L176 197Z',
  'M582 339L591 339L599 348L596 352L585 346ZM590 373L600 374L602 380L591 380ZM622 371L632 366L644 373L637 380L622 378Z',
  'M235 507L245 509L246 522L237 521ZM281 543L289 528L297 540L307 545L311 555L304 559L299 549L289 552ZM345 544L353 541L361 548L354 553L346 549Z',
];
const specks: [number, number][] = [[62, 481], [83, 586], [116, 738], [120, 802], [380, 375], [334, 321], [470, 388], [472, 420], [423, 492], [428, 497], [403, 539], [414, 536], [416, 546], [407, 559], [427, 530], [577, 599], [558, 608], [551, 618], [562, 627], [548, 622], [685, 654], [599, 720], [661, 712], [674, 710], [673, 724], [638, 747], [644, 752], [649, 772], [661, 768], [557, 807], [501, 829], [764, 795], [774, 790], [543, 548], [555, 765], [248, 670], [238, 641], [349, 265], [359, 268]];
const eastSpecks: [number, number][] = [[193, 285], [203, 277], [210, 281], [398, 266], [402, 262], [411, 297], [163, 415], [171, 404], [333, 471], [362, 489], [370, 498], [425, 408]];
const MapSvg = styled.svg`
  display: block;
`;
const MapView = () => (
  <MapSvg width="1017" height="822" viewBox="337 172 1017 822">
    <g transform="translate(550 270) scale(.3333)" stroke="#000" strokeLinejoin="round">
      <g fill="#985ce4" strokeWidth="3.600">{isles.map((d, i) => <path key={i} d={d} />)}</g>
      <path d={mainland} fill="#ff0" strokeWidth="2.300" />
      <path d="M432 490L447 486L452 491L446 496L440 492M215 645L226 640L228 652L238 655L240 640M550 758L556 770L561 762" fill="none" strokeWidth="3" />
      {specks.map(([x, y], i) => <circle key={i} cx={x} cy={y} r="3" />)}
    </g>
    <g transform="translate(740 440) scale(.3333)" stroke="#000" strokeLinejoin="round">
      <g fill="#985ce4" strokeWidth="3.600">{eastIsles.map((d, i) => <path key={i} d={d} />)}</g>
      <path d={eastland} fill="#ff0" strokeWidth="2.300" />
      {eastSpecks.map(([x, y], i) => <circle key={i} cx={x} cy={y} r="3" />)}
    </g>
  </MapSvg>
);

/* ---------- GRASS dock ---------- */
const RightDock = styled.section`
  width: 560px;
  flex: none;
  display: flex;
  flex-direction: column;
`;
const Notice = styled.p`
  margin: 12px 0 0 10px;
  line-height: 17px;
  font-size: 14.500px;
  letter-spacing: 0.2px;
  em { letter-spacing: 0.75px; }
`;
const TabLine = styled.div`
  display: flex;
  align-items: flex-end;
  height: 22px;
  margin: 9px 9px 0 10px;
  color: #808080;
`;
const GTab = styled.span<{ $w: number; $h: number; $on?: boolean }>`
  width: ${p => p.$w}px;
  height: ${p => p.$h}px;
  display: flex;
  align-items: center;
  justify-content: center;
  border: 1px solid #8b8b8b;
  border-bottom: ${p => (p.$on ? 'none' : '1px solid #8b8b8b')};
  border-radius: 2px 2px 0 0;
  background: ${p => (p.$on ? '#efefef' : 'linear-gradient(#fafafa,#eaeaea)')};
  margin-bottom: ${p => (p.$on ? -1 : 0)}px;
  z-index: 1;
`;
const CloseMapset = styled.span`
  margin-left: auto;
  width: 125px;
  height: 21px;
  margin-bottom: 1px;
  border: 1px solid #8b8b8b;
  border-radius: 2px;
  background: linear-gradient(#fafafa, #e6e6e6);
  display: flex;
  align-items: center;
  gap: 4px;
  padding-left: 6px;
  letter-spacing: 0.22px;
`;
const Pane = styled.div`
  height: 718px;
  margin: 0 9px 0 10px;
  border: 2px solid #a2a2a2;
  border-top: 1px solid #8b8b8b;
  padding: 10px 9px 8px;
  display: flex;
  flex-direction: column;
  gap: 6px;
  color: #808080;
`;
const FilterRow = styled.div`
  display: flex;
  align-items: center;
  height: 30px;
`;
const IconBtn = styled.span`
  width: 30px;
  height: 30px;
  border: 1px solid #8b8b8b;
  border-radius: 2px;
  background: #fafafa;
  display: flex;
  align-items: center;
  justify-content: center;
  margin-right: 10px;
`;
const FilterInput = styled.span`
  flex: 1;
  height: 21px;
  border: 1px solid #8b8b8b;
  border-radius: 2px;
  margin-left: 9px;
`;
const GTree = styled.div`
  flex: 1;
  border: 1px solid #9a9a9a;
  border-width: 2px 1px;
  padding: 0 0 0 6px;
  word-spacing: 1px;
`;
const GRow = styled.div<{ $child?: boolean; $h?: number }>`
  display: flex;
  align-items: center;
  height: ${p => p.$h ?? 15}px;
  padding-left: ${p => (p.$child ? 20 : 0)}px;
  svg { margin-left: 18px; }
`;
const Twirl = styled.i<{ $open?: boolean; $dark?: boolean }>`
  width: 9px;
  height: 9px;
  flex: none;
  border: 1px solid ${p => (p.$dark ? '#777' : '#999')};
  margin-right: 10px;
  background: linear-gradient(#777, #777) center / 5px 1px no-repeat,
    linear-gradient(#777, #777) center / 1px ${p => (p.$open ? 0 : 5)}px no-repeat;
  position: relative;
  &::after {
    content: '';
    position: absolute;
    left: 9px;
    top: 3px;
    width: 5px;
    border-top: 1px dotted #999;
  }
`;
const ShellText = styled.span`
  line-height: 15px;
  margin-left: 9px;
`;
const gmods = ['새로운 GRASS 위치를 만들고 거기에 데이터 전송', '파일 관리', '영역 설정', '투영 관리', '래스터', '벡터', '이미지'];

/* ---------- dialog ---------- */
const Dialog = styled.div`
  position: absolute;
  left: 1155px;
  top: 466px;
  width: 538px;
  height: 440px;
  border: 1px solid #4c4a48;
  background: #f0f0f0;
  box-shadow: 0 5px 18px rgba(0, 0, 0, 0.4);
  display: flex;
  flex-direction: column;
`;
const DlgTitle = styled.div`
  height: 37px;
  flex: none;
  background: #4c4a48;
  color: #f4f4f4;
  display: flex;
  align-items: center;
  padding: 0 24px 0 11px;
  gap: 8px;
  font: 14.800px "Open Sans", sans-serif;
`;
const DlgBtns = styled.span`
  margin-left: auto;
  display: flex;
  align-items: center;
  gap: 47px;
  font-size: 16px;
`;
const DlgTabs = styled.div`
  height: 25px;
  flex: none;
  display: flex;
  align-items: flex-end;
  margin: 0 4px 0 3px;
  border-bottom: 1px solid #b9b9b9;
`;
const DTab = styled.span<{ $w: number; $on?: boolean }>`
  width: ${p => p.$w}px;
  height: ${p => (p.$on ? 22 : 18)}px;
  border: 1px solid #b4b4b4;
  border-bottom: 0;
  border-radius: 2px 2px 0 0;
  background: ${p => (p.$on ? '#f0f0f0' : 'linear-gradient(#fafafa,#e2e2e2)')};
  display: flex;
  align-items: center;
  justify-content: center;
  padding-left: 2px;
  margin-bottom: ${p => (p.$on ? -1 : 0)}px;
`;
const DlgBody = styled.div`
  display: flex;
  padding: 10px 0 0 3px;
  height: 332px;
  flex: none;
`;
const EditorCol = styled.div`
  width: 193px;
  flex: none;
`;
const OpRow = styled.div`
  display: flex;
  gap: 2.100px;
  margin-bottom: 6px;
`;
const Op = styled.span<{ $first?: boolean; $tight?: boolean }>`
  width: 16.900px;
  height: 28px;
  flex: none;
  border: 1px solid ${p => (p.$first ? '#666' : '#bdbdbd')};
  border-radius: 3px;
  background: linear-gradient(${p => (p.$first ? '#e4e4e4,#d2d2d2' : '#fdfdfd,#dedede')});
  display: flex;
  align-items: center;
  justify-content: center;
  font-size: ${p => (p.$tight ? 9.5 : 14)}px;
  letter-spacing: ${p => (p.$tight ? -1 : 0)}px;
`;
const Editor = styled.div`
  height: 266px;
  border: 2px solid #3f93ea;
  border-left-color: #1f7fdd;
  border-radius: 2px;
  background: #fff;
  display: flex;
  flex-direction: column;
  justify-content: space-between;
`;
const CodeLine = styled.div`
  height: 17px;
  background: #fbf2ec;
  line-height: 18px;
  padding-left: 1px;
  letter-spacing: 0.28px;
  word-spacing: 1.500px;
  i { font-style: normal; color: #888; }
  b { font-weight: normal; color: #008080; }
`;
const Preview = styled.div`
  margin-top: 8px;
  word-spacing: 2px;
`;
const FnCol = styled.div`
  width: 155px;
  flex: none;
  display: flex;
  flex-direction: column;
  gap: 7px;
`;
const Search = styled.div`
  height: 21px;
  border: 1px solid #b9b9b9;
  border-radius: 2px;
  background: #fff;
  color: #888;
  padding: 2px 3px;
`;
const FnTree = styled.div`
  height: 286px;
  border: 1px solid #b9b9b9;
  border-radius: 2px;
  background: #fff;
  padding-top: 1px;
  line-height: 15px;
  word-spacing: 1px;
`;
const FnRow = styled.div<{ $on?: boolean }>`
  height: 15px;
  display: flex;
  align-items: center;
  padding-left: 6px;
  i { margin-right: 9px; }
  background: ${p => (p.$on ? '#f0f0f0' : 'linear-gradient(90deg, #fff 21px, #ededed 21px)')};
`;
const fns = ['Aggregates', 'Fuzzy Matching', 'Variables', '기록', '날짜와 시간', '문자열', '변환', '색상', '수학', '연산자', '일반 정보', '조건문', '지오메트리', '최근 (Selection)', '필드와 값'];
const HelpBox = styled.div`
  width: 154px;
  height: 314px;
  border: 1px solid #b9b9b9;
  border-radius: 2px;
  background: #fff;
  padding: 5px;
`;
const HelpHead = styled.h3`
  margin: 0;
  height: 42px;
  background: #f5f5f5;
  color: #729fcf;
  font: 18.500px/22px "Noto Sans CJK KR", sans-serif;
`;
const HelpTitle = styled.div`
  font: bold 20px/20px "Liberation Serif", serif;
  letter-spacing: 0.4px;
`;
const HelpText = styled.p`
  margin: 13px 0 0;
  font: 14.700px/17.100px "Liberation Sans", sans-serif;
`;
const DlgFoot = styled.div`
  display: flex;
  justify-content: flex-end;
  align-items: center;
  padding-right: 13px;
  margin-top: 9px;
  flex: none;
  height: 31px;
`;
const Btn = styled.span<{ $w: number; $h: number; $dark?: boolean; $ml?: number }>`
  width: ${p => p.$w}px;
  height: ${p => p.$h}px;
  margin-left: ${p => p.$ml ?? 0}px;
  border: 1px solid ${p => (p.$dark ? '#7d7d7d' : '#b9b9b9')};
  border-radius: 3px;
  background: linear-gradient(#fdfdfd, ${p => (p.$dark ? '#ececec' : '#dcdcdc')});
  display: flex;
  align-items: center;
  justify-content: center;
  gap: 4px;
`;

/* ---------- status bar ---------- */
const Status = styled.div`
  height: 34px;
  flex: none;
  display: flex;
  align-items: center;
  padding: 0 0 0 866px;
`;
const SText = styled.span<{ $w: number; $ls?: number; $pl?: number }>`
  width: ${p => p.$w}px;
  padding-left: ${p => p.$pl ?? 0}px;
  flex: none;
  letter-spacing: ${p => p.$ls ?? 0}px;
`;
const SBox = styled.span<{ $w: number; $c?: boolean; $mr?: number }>`
  width: ${p => p.$w}px;
  height: 21px;
  flex: none;
  border: 1px solid #b9b9b9;
  border-radius: 2px;
  background: #fff;
  display: flex;
  align-items: center;
  justify-content: ${p => (p.$c ? 'center' : 'space-between')};
  padding-left: ${p => (p.$c ? 0 : 4)}px;
  margin-right: ${p => p.$mr ?? 0}px;
  font-size: 14.200px;
  letter-spacing: 0.2px;
`;
const Spin = styled.span`
  width: 16px;
  height: 100%;
  background: #f2f2f2;
  border-left: 1px solid #bbb;
  display: flex;
  flex-direction: column;
  align-items: center;
  justify-content: space-around;
`;
const SIcon = styled.span<{ $w: number }>`
  width: ${p => p.$w}px;
  flex: none;
`;

/* ---------- taskbar ---------- */
const Taskbar = styled.footer`
  height: 50px;
  flex: none;
  background: #161616;
  display: flex;
  color: #fff;
  font-family: "Open Sans", "Noto Sans CJK KR", sans-serif;
`;
const Task = styled.div<{ $w?: number; $run?: boolean; $on?: boolean }>`
  width: ${p => p.$w ?? 62.05}px;
  height: 50px;
  flex: none;
  display: flex;
  align-items: center;
  justify-content: center;
  background: ${p => (p.$run ? `linear-gradient(#b5b3b0, #b5b3b0) center bottom / ${p.$on ? 61 : 51}px 3px no-repeat ${p.$on ? '#333231' : ''}` : 'none')};
`;
const Tray = styled.div`
  margin-left: auto;
  display: flex;
  align-items: center;
  width: 330px;
`;
const TrayIcon = styled.div<{ $w: number }>`
  width: ${p => p.$w}px;
  display: flex;
  justify-content: center;
  flex: none;
`;
const Clock = styled.div`
  width: 84px;
  flex: none;
  text-align: center;
  font-size: 13.800px;
  line-height: 23.500px;
  letter-spacing: -0.1px;
`;

const taskIcons: [string, React.ReactNode, boolean?][] = [
  ['chrome', <g><circle cx="14" cy="14" r="13.500" fill="#dd4b3e" /><path d="M14 14L2.300 7.200A13.500 13.500 0 0 0 13 27.500l6-10z" fill="#1a9f5a" /><path d="M14 27.500A13.500 13.500 0 0 0 26 8H14l5.500 9z" fill="#fccd3f" /><circle cx="14" cy="14" r="6.300" fill="#fff" /><circle cx="14" cy="14" r="4.800" fill="#4a8af4" /></g>],
  ['edge', <path d="M2 12C4 4 9 1 15 1c7 0 11 5 11 11v4H10c0 4 4 6 8 6 3 0 5-.500 7-2v5c-3 2-6 2.500-9 2.500C8 27.500 4 23 4 17c0-5 3-8 7-10-2 2-2 4-2 5h10c0-4-2-6-6-6-4 0-8 2-11 6z" fill="#1279d8" />, true],
  ['ie', <g><path d="M4 15a10 10 0 1 1 20 1H10c0 5 7 6 9 2h5c-3 10-20 9-20-3zm6-3h8c0-5-8-5-8 0z" fill="#5cc3f0" stroke="#9fe0ff" strokeWidth=".6" /><path d="M3 26C-3 20 17-2 26 2c3 2 0 7-2 9 2-4 2-7-2-6C13 7 2 20 5 24z" fill="#f7c62e" /></g>],
  ['explorer', <g><path d="M0 3h11l2 3h14v18H0z" fill="#f3cf6b" /><path d="M0 9h28v16H0z" fill="#fde497" /><path d="M5 15h18v11h-5v-6h-8v6H5z" fill="#3ea9df" /></g>, true],
  ['snip', <g><circle cx="12" cy="9" r="8.500" fill="#f4f0f0" stroke="#ccc" /><path d="M4 9l14-7 2 6-13 6z" fill="#fff" stroke="#d44" strokeWidth=".8" /><path d="M13 12l8 12M20 13l-6 10" stroke="#aaa" strokeWidth="2" /><circle cx="15" cy="23" r="3" fill="none" stroke="#3b76bd" strokeWidth="2" /><circle cx="23" cy="23" r="3" fill="none" stroke="#3b76bd" strokeWidth="2" /></g>],
  ['putty', <g stroke="#ddd"><rect x="14" y="2" width="11" height="9" fill="#1c1cd8" strokeWidth="1.500" /><path d="M13 13h14" strokeWidth="3" /><rect x="2" y="15" width="11" height="9" fill="#1c1cd8" strokeWidth="1.500" /><path d="M1 26h14" strokeWidth="3" /><path d="M17 8l-6 5 5 1-6 5" stroke="#f6ef1c" strokeWidth="2" fill="none" /></g>],
  ['talk', <g><rect x="-1" y="-1" width="30" height="30" rx="2" fill="#fae100" /><path d="M14 4c6 0 11 4 11 9s-5 9-11 9l-5 4 1-5C6 20 3 17 3 13c0-5 5-9 11-9z" fill="#3b1e1e" /><text x="4.500" y="16" fontSize="8" fontWeight="bold" fill="#fae100">TALK</text></g>],
  ['bird', <g><path d="M7 0l3 3 2-3 2 3 3-3v7H7z" fill="#f0b82c" /><path d="M4 11c0-6 16-6 16 0l-2 7 3 7-6-2-4 5-3-5-5 2 3-7z" fill="#1d6cba" /><circle cx="7.500" cy="13" r="3.500" fill="#333" stroke="#e3b83b" strokeWidth="1.500" /><circle cx="16.500" cy="13" r="3.500" fill="#333" stroke="#e3b83b" strokeWidth="1.500" /><text x="18.500" y="12" fontSize="15" fontWeight="bold" fill="#fff">#</text></g>],
  ['pdf', <g><rect x="1" y="1" width="26" height="26" fill="#2a0a0a" stroke="#f51b0c" strokeWidth="2" /><path d="M6 21c3 0 11-13 8-15-3 0 1 12 8 10-3-3-12 0-16 5z" fill="none" stroke="#fff" strokeWidth="1.400" /></g>],
  ['term', <g><rect x="-1" y="1" width="30" height="26" fill="#1f4450" stroke="#6fa2ad" strokeWidth="1.500" /><path d="M21 8H7v13h12v-6h-6" fill="none" stroke="#c8dde2" strokeWidth="3" /><rect x="12" y="14" width="18" height="14" fill="#111" stroke="#aaa" /><text x="13" y="22" fontSize="6" fill="#fff">C:\_</text></g>, true],
  ['docs', <g><path d="M0 9l7-4 7 20-7 1z" fill="#ffc22b" /><path d="M3 6l9-4 7 20-9 4z" fill="#2fa05d" /><path d="M8 3h13l7 6-5 18H12z" fill="#2f7ee8" /><path d="M14 11h9M15 15h8M16 19h6" stroke="#fff" strokeWidth="1.200" /></g>],
  ['vim', <g><path d="M14 0l13 13-13 14L1 14z" fill="#12831d" stroke="#2eb93a" /><path d="M2 3h9v3H9l1 11L19 6h-2V3h9v3L10 25H6L4 6H2z" fill="#ccc" stroke="#222" /><text x="13" y="26" fontFamily="Liberation Serif" fontSize="14" fontStyle="italic" fontWeight="bold" fill="#eee" stroke="#333" strokeWidth=".4">im</text></g>, true],
  ['git', <g><path d="M14 0l7 7-7 7-7-7z" fill="#f1746c" /><path d="M7 7l7 7-7 7-7-7z" fill="#5f9bf0" /><path d="M21 7l7 7-7 7-7-7z" fill="#86c157" /><path d="M14 14l7 7-7 7-7-7z" fill="#f9d276" /><path d="M13 5v17M13 9l6 6M19 15v2" stroke="#3c2b26" strokeWidth="2.200" /><circle cx="13" cy="22" r="2.500" fill="#3c2b26" /><circle cx="20" cy="15" r="2.500" fill="#3c2b26" /></g>, true],
  ['paint', <g><path d="M13 5c9 0 13 5 13 10 0 4-3 6-6 5s-4 1-4 4-3 4-7 2C3 24 0 19 1 14S7 5 13 5z" fill="#b9dcf1" stroke="#7fb5d6" /><circle cx="8" cy="13" r="2" fill="#e34b3d" /><circle cx="14" cy="10" r="2" fill="#f2b92c" /><circle cx="19" cy="13" r="2" fill="#53a947" /><circle cx="6" cy="19" r="2" fill="#3a6cc8" /><path d="M24 1l3 3-9 15-2 2 0-4z" fill="#c4854a" /></g>, true],
];

export default function App() {
  return (
    <Screen>
      <Global />
      <TitleBar>
        <Icon n="qgis" s={18} w={16} />
        QGIS2.18.2
        <WinButtons>
          <svg width="12" height="12"><path d="M0 6.500h12" stroke="#999" /></svg>
          <svg width="13" height="13"><path d="M.5 3.500h9v9h-9zM3.500 3v-2.500h9v9h-3" fill="none" stroke="#999" /></svg>
          <svg width="13" height="13"><path d="M.5.5l12 12M12.500.5l-12 12" stroke="#999" /></svg>
        </WinButtons>
      </TitleBar>
      <MenuBar>
        {menus.map(([t, k, w]) => <MenuItem key={t} $w={w}><Hangul>{t}</Hangul>(<u>{k}</u>)</MenuItem>)}
      </MenuBar>
      <Toolbar><ToolItems items={row1} /></Toolbar>
      <Toolbar><ToolItems items={row2} /></Toolbar>
      <Toolbar $h={38}><ToolItems items={row3} /></Toolbar>

      <Main>
        <SideBar>
          <ZigH $w={48} />
          {['addvec', 'addras', 'feather', 'pg>', 'spatia>', 'wms', 'wfs>', 'comma', 'virt', 'newvec>'].map(n => (
            <SideItem key={n}><Icon n={n.replace('>', '')} />{n.endsWith('>') && <Caret />}</SideItem>
          ))}
          <ZigH $w={48} $mt={8} />
        </SideBar>
        <LeftDock>
          <DockTitle><ZigH />Browser Panel<ZigH /><DockButtons /></DockTitle>
          <MiniTools $h={32}>
            {['newlayer', 'refresh', 'filter', 'collapse', 'info'].map(n => <Mini key={n}><Icon n={n} s={15} /></Mini>)}
          </MiniTools>
          <Frame $h={216}>
            <BrowserGrid>
              <FileList>
                {files.map((f, i) => <FileRow key={f} $on={i === 3}><Icon n={i === 3 ? 'polyblue' : 'poly'} s={17} w={20} />{f}</FileRow>)}
                <FileRow $top><Icon n="poly" s={17} w={20} />Code_DistrictTitle_Area_Population.</FileRow>
              </FileList>
              <VBar>
                <SbBtn><Tri $d="up" /></SbBtn>
                <SbBtn $h={26} $mt={44} />
                <SbBtn $mt={79}><Tri $d="up" /></SbBtn>
                <SbBtn><Tri $d="down" /></SbBtn>
              </VBar>
              <HBar>
                <SbBtn><Tri $d="left" /></SbBtn>
                <SbBtn $w={74} $ml={25}><ThumbDots /></SbBtn>
                <SbBtn $w={15} $ml={107}><Tri $d="left" /></SbBtn>
                <SbBtn $w={16}><Tri $d="right" /></SbBtn>
              </HBar>
            </BrowserGrid>
          </Frame>
          <DockTitle $h={7}><Mini $w={82} /><ZigH $w={88} /></DockTitle>
          <DockTitle $h={20}><ZigH />Layers Panel<ZigH /><DockButtons /></DockTitle>
          <MiniTools $h={33}>
            {['brush', 'group', 'eye', 'filter', 'epsfil'].map(n => <Mini key={n}><Icon n={n} s={16} /></Mini>)}
            <Mini $w={12}><Caret /></Mini>
            {['expand', 'collapse', 'remove'].map(n => <Mini key={n}><Icon n={n} s={16} /></Mini>)}
          </MiniTools>
          <Frame>
            <LayerRow $on><Mini $w={4} /><Check><CheckX /></Check><Swatch $c="#7b6eec" /><LayerName $u $ls={0.6}>Single parts</LayerName></LayerRow>
            <LayerRow><Mini $w={4} /><Check /><Swatch $c="#10c48c" /><LayerName $ls={1}>TL_SCCO_SIG_crs84</LayerName></LayerRow>
          </Frame>
        </LeftDock>
        <Splitter $w={6}><DotsV $h={275} /></Splitter>
        <Canvas><MapView /></Canvas>
        <Splitter $w={5}><DotsV $h={275} /></Splitter>
        <RightDock>
          <DockTitle $gap={9}><ZigH /><SmallTitle><Label text="GRASS 도구" /></SmallTitle><ZigH /><DockButtons /></DockTitle>
          <Notice>No mapset is open. You can open a GRASS mapset from the browser using the{'\n'}mapset item's context menu action <em>Open mapset</em>.</Notice>
          <TabLine>
            <GTab $w={86} $h={22} $on>Modules</GTab>
            <GTab $w={59} $h={19}><Label text="영역" /></GTab>
            <CloseMapset><Icon n="power" s={15} />Close mapset</CloseMapset>
          </TabLine>
          <Pane>
            <FilterRow><IconBtn><Icon n="listview" s={20} /></IconBtn><Label text="필터" /><FilterInput /></FilterRow>
            <GTree>
              <GRow $h={15}><Twirl $open /><span><Label text="GRASS 모듈" /></span></GRow>
              <GRow $child $h={32}><Icon n="shell" s={29} /><ShellText>shell{'\n'}<Label text="GRASS 쉘" /></ShellText></GRow>
              {gmods.map(m => <GRow key={m} $child><Twirl /><span><Label text={m} /></span></GRow>)}
            </GTree>
          </Pane>
        </RightDock>
      </Main>

      <Status>
        <SText $w={33}><Label text="좌표" /></SText>
        <SBox $w={265} $c $mr={5}>131.88094,37.24258</SBox>
        <SIcon $w={35}><Icon n="mouse" s={20} /></SIcon>
        <SText $w={32}><Label text="축척" /></SText>
        <SBox $w={108} $mr={8}>1:9,014<Spin><Tri $d="down" /></Spin></SBox>
        <SIcon $w={32}><Icon n="lock" s={19} w={17} /></SIcon>
        <SText $w={61} $ls={-0.2}>Magnifier</SText>
        <SBox $w={85} $mr={10}>100%<Spin><Tri $d="up" /><Tri $d="down" /></Spin></SBox>
        <SText $w={37}><Label text="회전" /></SText>
        <SBox $w={86} $mr={6}>0.0<Spin><Tri $d="up" /><Tri $d="down" /></Spin></SBox>
        <Check><CheckX /></Check>
        <SText $w={70} $pl={5}><Label text="렌더링" /></SText>
        <SIcon $w={23}><Icon n="globe" s={18} /></SIcon>
        <SText $w={104} $ls={0.1}>EPSG:4326</SText>
        <Icon n="chat" s={21} />
      </Status>

      <Taskbar>
        <Task $w={60}><svg width="20" height="20"><path d="M0 3l9-1.300V9.500H0zM10 1.500L20 0v9.500H10zM0 10.500h9v7.800L0 17zM10 10.500h10V20l-10-1.500z" fill="#fff" /></svg></Task>
        <Task $w={62.5}><svg width="24" height="18"><path d="M5.500.5h13v17h-13zM2.500 3h-2v12h2M21.500 3h2v12h-2" fill="none" stroke="#fff" strokeWidth="1.200" /></svg></Task>
        {taskIcons.map(([n, art, run]) => (
          <Task key={n} $run={run}><IconSvg width={28} height={28} viewBox="0 0 28 28">{art}</IconSvg></Task>
        ))}
        <Task $w={61} $run $on><Icon n="qgis" s={28} w={25} /></Task>
        <Tray>
          <TrayIcon $w={18}><svg width="16" height="9"><path d="M1 8l7-7 7 7" fill="none" stroke="#fff" strokeWidth="1.400" /></svg></TrayIcon>
          <TrayIcon $w={42}><svg width="16" height="20"><path d="M3.500 6h8v12h-8zM5 6V1.500h5V6M10 15l2 3 4-6" fill="none" stroke="#fff" strokeWidth="1.200" /></svg></TrayIcon>
          <TrayIcon $w={20}><svg width="20" height="16"><path d="M7.500 5.500h10v7h-10z" fill="#fff" /><path d="M5.500 3.500h14v11h-14zM2 0v4M5 0v4M1 4h5v3H1zM3.500 7v4" fill="none" stroke="#fff" /></svg></TrayIcon>
          <TrayIcon $w={40}><svg width="17" height="16"><path d="M1 14C1 6 7 1 15 1M5 14c0-5 4-9 10-9M9 14c0-3 2-5 6-5" fill="none" stroke="#ccc" strokeWidth="1.300" /><circle cx="14" cy="13.500" r="1.500" fill="#fff" /></svg></TrayIcon>
          <TrayIcon $w={18}><svg width="20" height="16"><path d="M1 5.500h3l5-4v13l-5-4H1z" fill="none" stroke="#fff" /><path d="M12 5c1 2 1 4 0 6M14.500 3c2 3 2 7 0 10M17 1c3 4 3 10 0 14" fill="none" stroke="#aaa" /></svg></TrayIcon>
          <TrayIcon $w={39}><svg width="16" height="18"><path d="M1 17L7 1h2l6 16M3.500 11h9" fill="none" stroke="#fff" strokeWidth="1.800" /></svg></TrayIcon>
          <Clock>오후 2:56{'\n'}2017-04-29</Clock>
          <TrayIcon $w={58}><svg width="20" height="20"><path d="M.7 1h18.600v14.500h-5v3.500l-3.500-3.500H.7z" fill="none" stroke="#fff" strokeWidth="1.300" /></svg></TrayIcon>
        </Tray>
      </Taskbar>

      <Dialog>
        <DlgTitle>
          <Icon n="qgis" s={18} w={15} />
          Select by expression - Single parts
          <DlgBtns>?<svg width="13" height="13"><path d="M.5.5l12 12M12.500.5l-12 12" stroke="#fff" strokeWidth="1.200" /></svg></DlgBtns>
        </DlgTitle>
        <DlgTabs>
          <DTab $w={74} $on><Label text="표현식" /></DTab>
          <DTab $w={128}>Function Editor</DTab>
        </DlgTabs>
        <DlgBody>
          <EditorCol>
            <OpRow>{['=', '+', '−', '/', '*', '^', '||', '(', ')', '₩n'].map((o, i) => <Op key={o} $first={!i} $tight={i === 9}>{o}</Op>)}</OpRow>
            <Editor>
              <CodeLine><i>$</i>area &gt; <b>0.000007</b></CodeLine>
              <HBar>
                <SbBtn><Tri $d="left" /></SbBtn>
                <SbBtn $w={26} />
                <SbBtn $ml={115}><Tri $d="left" /></SbBtn>
                <SbBtn><Tri $d="right" /></SbBtn>
              </HBar>
            </Editor>
            <Preview><Label text="출력 미리보기: 0" /></Preview>
          </EditorCol>
          <Splitter $w={13}><DotsV $h={107} /></Splitter>
          <FnCol>
            <Search><Label text="검색" /></Search>
            <FnTree>
              {fns.map((f, i) => <FnRow key={f} $on={!i}><Twirl $dark /><span><Label text={f} /></span></FnRow>)}
            </FnTree>
          </FnCol>
          <Splitter $w={6}><DotsV $h={100} /></Splitter>
          <HelpBox>
            <HelpHead>그룹<HelpTitle>Aggregates</HelpTitle></HelpHead>
            <HelpText>Contains functions{'\n'}which aggregate{'\n'}values over layers{'\n'}and fields.</HelpText>
          </HelpBox>
        </DlgBody>
        <DlgFoot>
          <Btn $w={74} $h={31} $dark><Icon n="expr" s={18} /><span><Label text="선택" /></span></Btn>
          <Btn $w={14} $h={31} $dark><Caret /></Btn>
          <Btn $w={93} $h={28} $ml={11}><Label text="닫기" /></Btn>
        </DlgFoot>
      </Dialog>
    </Screen>
  );
}
